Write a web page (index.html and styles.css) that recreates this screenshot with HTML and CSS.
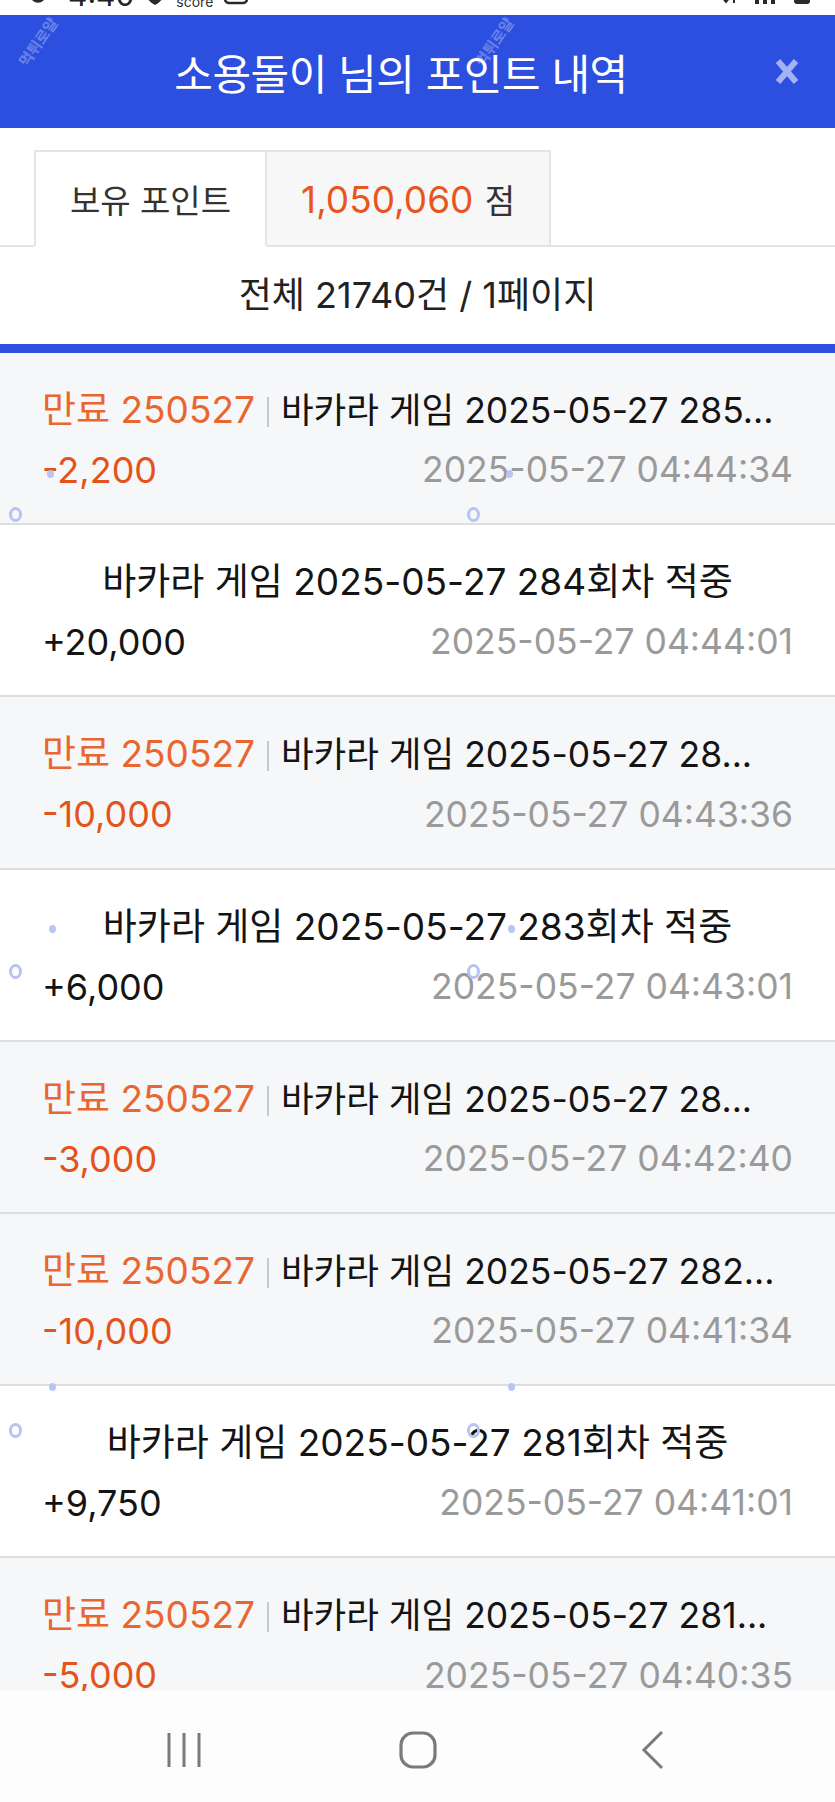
FILE: index.html
```html
<!DOCTYPE html>
<html lang="ko">

<head>
    <meta charset="utf-8">
    <meta name="viewport" content="width=device-width,initial-scale=1.0">
    <title>포인트 내역</title>
    <link rel="stylesheet" href="styles.css">
</head>

<body>
    <div class="phone">
        <!-- 상단 상태바 (잘린 부분) -->
        <div class="status">
            <div class="st-left">
                <svg class="st-ring" width="16" height="22" viewBox="0 0 16 22"><circle cx="8" cy="11" r="6" fill="none" stroke="#2a2a2a" stroke-width="3.5"/></svg>
                <span class="st-time">4:40</span>
                <svg class="st-shield" width="22" height="24" viewBox="0 0 22 24"><path d="M2 3 L11 0 L20 3 L20 11 C20 17 15 21 11 23 C7 21 2 17 2 11 Z" fill="#2a2a2a"/></svg>
                <span class="st-score">score</span>
                <svg class="st-box" width="26" height="24" viewBox="0 0 26 24"><rect x="2" y="2" width="22" height="19" rx="4" fill="none" stroke="#2a2a2a" stroke-width="2.5"/></svg>
            </div>
            <div class="st-right">
                <svg width="18" height="24" viewBox="0 0 18 24"><path d="M5 2 V20 M1 16 L5 21 L9 16 M13 22 V4 M9 8 L13 3 L17 8" fill="none" stroke="#2a2a2a" stroke-width="2"/></svg>
                <svg width="26" height="24" viewBox="0 0 26 24"><rect x="2" y="14" width="4" height="9" fill="#2a2a2a"/><rect x="10" y="10" width="4" height="13" fill="#2a2a2a"/><rect x="18" y="4" width="4" height="19" fill="#2a2a2a"/></svg>
                <svg width="18" height="24" viewBox="0 0 18 24"><rect x="1" y="2" width="16" height="21" rx="3" fill="#2a2a2a"/></svg>
            </div>
        </div>

        <div class="app">
            <div class="header">
                <span class="wm wm-1">먹튀로얄</span>
                <span class="wm wm-2">먹튀로얄</span>
                <div class="title">소용돌이 님의 포인트 내역</div>
                <a class="close" href="#">
                    <svg width="24" height="27" viewBox="0 0 24 27"><path d="M3 3 L21 24 M21 3 L3 24" stroke="#a3b2f3" stroke-width="6" fill="none"/></svg>
                </a>
            </div>

            <div class="tabs">
                <div class="tab active"><span>보유 포인트</span></div>
                <div class="tab"><span><span class="point">1,050,060</span> 점</span></div>
            </div>

            <div class="summary">전체 21740건 / 1페이지</div>

            <ul class="list">
                <li class="item expire">
                    <div class="memo"><span class="tag">만료 250527</span><i class="sep"></i>바카라 게임 2025-05-27 285...</div>
                    <div class="row">
                        <span class="amount minus">-2,200</span>
                        <span class="date">2025-05-27 04:44:34</span>
                    </div>
                </li>
                <li class="item">
                    <div class="memo">바카라 게임 2025-05-27 284회차 적중</div>
                    <div class="row">
                        <span class="amount">+20,000</span>
                        <span class="date">2025-05-27 04:44:01</span>
                    </div>
                </li>
                <li class="item expire">
                    <div class="memo"><span class="tag">만료 250527</span><i class="sep"></i>바카라 게임 2025-05-27 28...</div>
                    <div class="row">
                        <span class="amount minus">-10,000</span>
                        <span class="date">2025-05-27 04:43:36</span>
                    </div>
                </li>
                <li class="item">
                    <div class="memo">바카라 게임 2025-05-27 283회차 적중</div>
                    <div class="row">
                        <span class="amount">+6,000</span>
                        <span class="date">2025-05-27 04:43:01</span>
                    </div>
                </li>
                <li class="item expire">
                    <div class="memo"><span class="tag">만료 250527</span><i class="sep"></i>바카라 게임 2025-05-27 28...</div>
                    <div class="row">
                        <span class="amount minus">-3,000</span>
                        <span class="date">2025-05-27 04:42:40</span>
                    </div>
                </li>
                <li class="item expire">
                    <div class="memo"><span class="tag">만료 250527</span><i class="sep"></i>바카라 게임 2025-05-27 282...</div>
                    <div class="row">
                        <span class="amount minus">-10,000</span>
                        <span class="date">2025-05-27 04:41:34</span>
                    </div>
                </li>
                <li class="item">
                    <div class="memo">바카라 게임 2025-05-27 281회차 적중</div>
                    <div class="row">
                        <span class="amount">+9,750</span>
                        <span class="date">2025-05-27 04:41:01</span>
                    </div>
                </li>
                <li class="item expire">
                    <div class="memo"><span class="tag">만료 250527</span><i class="sep"></i>바카라 게임 2025-05-27 281...</div>
                    <div class="row">
                        <span class="amount minus">-5,000</span>
                        <span class="date">2025-05-27 04:40:35</span>
                    </div>
                </li>

                <!-- 워터마크 -->
                <li class="mark dot" style="left:47px;top:117px"></li>
                <li class="mark dot" style="left:506px;top:117px"></li>
                <li class="mark ring" style="left:9px;top:154px"></li>
                <li class="mark ring" style="left:467px;top:154px"></li>
                <li class="mark dot" style="left:49px;top:572px"></li>
                <li class="mark dot" style="left:508px;top:572px"></li>
                <li class="mark ring" style="left:9px;top:611px"></li>
                <li class="mark ring" style="left:467px;top:611px"></li>
                <li class="mark dot" style="left:49px;top:1030px"></li>
                <li class="mark dot" style="left:508px;top:1030px"></li>
                <li class="mark ring" style="left:9px;top:1070px"></li>
                <li class="mark ring" style="left:467px;top:1070px"></li>
            </ul>
        </div>

        <!-- 하단 내비게이션 바 -->
        <div class="nav">
            <a class="nav-btn" href="#">
                <svg width="40" height="40" viewBox="0 0 40 40"><path d="M5 3 V37 M20 3 V37 M35 3 V37" stroke="#7a7a7a" stroke-width="3" fill="none"/></svg>
            </a>
            <a class="nav-btn" href="#">
                <svg width="40" height="40" viewBox="0 0 40 40"><rect x="3" y="3" width="34" height="34" rx="12" stroke="#7a7a7a" stroke-width="3.2" fill="none"/></svg>
            </a>
            <a class="nav-btn" href="#">
                <svg width="40" height="40" viewBox="0 0 40 40"><path d="M30 2 L12 20 L30 38" stroke="#7a7a7a" stroke-width="3" fill="none"/></svg>
            </a>
        </div>
    </div>
</body>

</html>
```

FILE: styles.css
```css
html,
body,
ul,
li {
    padding: 0;
    margin: 0;
    list-style: none;
}

a {
    text-decoration: none;
}

body {
    background: #ffffff;
    font-family: Inter, "Noto Sans CJK KR", sans-serif;
    color: #1b1b1b;
}

div {
    box-sizing: border-box;
}

.phone {
    width: 835px;
    height: 1802px;
    display: flex;
    flex-direction: column;
    overflow: hidden;
}

/* status bar */
.status {
    flex: none;
    height: 15px;
    overflow: hidden;
    display: flex;
    justify-content: space-between;
    align-items: flex-end;
    padding: 0 24px 0 30px;
    background: #ffffff;
}

.st-left,
.st-right {
    display: flex;
    align-items: flex-end;
    gap: 10px;
    margin-bottom: 9px;
}

.st-right {
    gap: 14px;
    margin-bottom: 10px;
}

.st-time {
    font-size: 30px;
    line-height: 30px;
    color: #222;
    margin: 0 0 -4px 12px;
}

.st-score {
    font-size: 14px;
    line-height: 14px;
    color: #333;
    margin-bottom: -3px;
}

/* app */
.app {
    flex: 1;
    display: flex;
    flex-direction: column;
    min-height: 0;
}

.header {
    position: relative;
    flex: none;
    height: 113px;
    background: #2d4fe0;
    display: flex;
    align-items: center;
    padding: 0 36px 0 27px;
    overflow: hidden;
}

.header>.title {
    flex: 1;
    text-align: center;
    color: #ffffff;
    font-size: 42px;
    font-weight: 400;
    letter-spacing: -0.5px;
}

.header>.close {
    display: flex;
    width: 24px;
}

.wm {
    position: absolute;
    top: 16px;
    font-size: 15px;
    font-weight: 700;
    color: rgba(255, 255, 255, 0.3);
    transform: rotate(-55deg);
}

.wm-1 {
    left: 10px;
}

.wm-2 {
    left: 466px;
}

/* tabs */
.tabs {
    flex: none;
    display: flex;
    align-items: flex-end;
    padding: 22px 0 0 34px;
    border-bottom: 2px solid #e4e4e4;
}

.tab {
    height: 97px;
    margin-bottom: -2px;
    padding: 0 34px;
    display: flex;
    align-items: center;
    justify-content: center;
    font-size: 33px;
    color: #333;
    background: #f7f7f7;
    border: 2px solid #e4e4e4;
    border-left: none;
}

.tab.active {
    background: #ffffff;
    border-left: 2px solid #e4e4e4;
    border-bottom-color: #ffffff;
}

.tab .point {
    color: #e8561f;
    font-size: 37px;
    margin-right: 2px;
}

.summary {
    flex: none;
    height: 97px;
    line-height: 97px;
    text-align: center;
    font-size: 36px;
    color: #222;
}

/* list */
.list {
    position: relative;
    flex: 1;
    min-height: 0;
    overflow: hidden;
    border-top: 9px solid #2d4fe0;
}

.item {
    height: 172.2px;
    box-sizing: border-box;
    padding: 34px 42px 0;
    border-bottom: 2px solid #dedede;
    background: #ffffff;
    font-size: 37px;
}

.item.expire {
    background: #f6f7f9;
}

.item>.memo {
    height: 46px;
    line-height: 46px;
    text-align: center;
    white-space: nowrap;
    overflow: hidden;
    text-overflow: ellipsis;
    color: #141414;
}

.item.expire>.memo {
    text-align: left;
    font-size: 35.5px;
}

.memo>.tag {
    font-size: 37px;
    color: #ea6630;
}

.memo>.sep {
    display: inline-block;
    width: 2px;
    height: 30px;
    margin: 0 12px;
    background: #c9c9c9;
    vertical-align: -4px;
}

.item>.row {
    display: flex;
    justify-content: space-between;
    align-items: center;
    height: 46px;
    margin-top: 14px;
    line-height: 1;
}

.row>.amount {
    font-size: 36px;
    color: #141414;
}

.row>.amount.minus {
    color: #e4531b;
}

.row>.date {
    font-size: 35.5px;
    color: #9a9a9a;
}

.mark {
    position: absolute;
    box-sizing: border-box;
    border-radius: 50%;
}

.mark.dot {
    width: 7px;
    height: 8px;
    background: #b9c6f2;
}

.mark.ring {
    width: 13px;
    height: 15px;
    border: 3px solid #b6c3f3;
}

/* bottom navigation */
.nav {
    flex: none;
    height: 111px;
    display: flex;
    justify-content: center;
    align-items: center;
    gap: 174px;
    padding-top: 6px;
    background: #fdfdfd;
}

.nav-btn {
    display: flex;
    justify-content: center;
    width: 60px;
}
```
